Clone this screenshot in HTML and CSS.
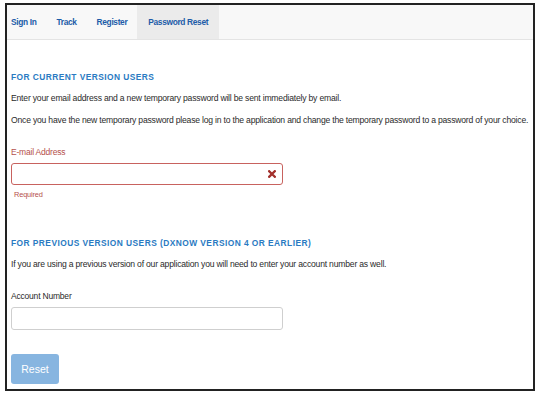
FILE: index.html
```html
<!DOCTYPE html>
<html>
<head>
<meta charset="utf-8">
<link rel="stylesheet" href="styles.css">
</head>
<body>
<div class="frame">
  <nav class="tabs">
    <a class="tab">Sign In</a>
    <a class="tab">Track</a>
    <a class="tab">Register</a>
    <a class="tab active">Password Reset</a>
  </nav>
  <div class="content">
    <h2 class="heading first">FOR CURRENT VERSION USERS</h2>
    <p class="text">Enter your email address and a new temporary password will be sent immediately by email.</p>
    <p class="text">Once you have the new temporary password please log in to the application and change the temporary password to a password of your choice.</p>
    <div class="field error">
      <label class="label">E-mail Address</label>
      <div class="input">
        <svg class="x-icon" width="8" height="8" viewBox="0 0 8 8"><path d="M1.2 1.2L6.8 6.8M6.8 1.2L1.2 6.8" stroke="#a3302c" stroke-width="2.3" stroke-linecap="square"/></svg>
      </div>
      <div class="hint">Required</div>
    </div>
    <h2 class="heading second">FOR PREVIOUS VERSION USERS (DXNOW VERSION 4 OR EARLIER)</h2>
    <p class="text">If you are using a previous version of our application you will need to enter your account number as well.</p>
    <div class="field">
      <label class="label">Account Number</label>
      <div class="input"></div>
    </div>
    <button class="btn">Reset</button>
  </div>
</div>
</body>
</html>
```
FILE: styles.css
```css
html, body {
  margin: 0;
  padding: 0;
  background: #fff;
}
body {
  padding: 3px 3px 0 5px;
  font-family: "Liberation Sans", Arial, sans-serif;
}
.frame {
  width: 526px;
  height: 384px;
  border: 2px solid #222;
  background: #fff;
  overflow: hidden;
}
.tabs {
  display: flex;
  height: 34px;
  background: #f8f8f8;
  border-bottom: 1px solid #e4e4e4;
}
.tab {
  display: flex;
  align-items: center;
  padding: 0 10px;
  font-size: 8.4px;
  letter-spacing: -0.35px;
  font-weight: bold;
  color: #1d5ca8;
}
.tab:first-child {
  padding-left: 4px;
}
.tab.active {
  background: #ebebeb;
  padding: 0 11px;
}
.content {
  padding: 0 4px;
}
.heading {
  margin: 0;
  font-size: 8.4px;
  line-height: 12px;
  font-weight: bold;
  letter-spacing: 0.45px;
  color: #2a7ac2;
}
.heading.first {
  margin-top: 31px;
  margin-bottom: 9px;
}
.heading.second {
  margin-top: 37px;
  margin-bottom: 9px;
}
.text {
  margin: 0 0 10px;
  font-size: 8.6px;
  letter-spacing: -0.2px;
  line-height: 12px;
  color: #2a2a2a;
  white-space: nowrap;
}
.field {
  margin-top: 20px;
}
.label {
  display: block;
  font-size: 8.5px;
  letter-spacing: -0.2px;
  line-height: 12px;
  color: #2a2a2a;
  margin-bottom: 5px;
}
.input {
  width: 272px;
  height: 23px;
  box-sizing: border-box;
  border: 1px solid #cfcfcf;
  border-radius: 3px;
  display: flex;
  align-items: center;
  justify-content: flex-end;
  padding-right: 6px;
}
.field.error .label {
  color: #b5504c;
}
.field.error .input {
  height: 22px;
  border-color: #c8625e;
}
.hint {
  margin-top: 5px;
  font-size: 7.4px;
  letter-spacing: -0.15px;
  line-height: 10px;
  color: #b5504c;
  padding-left: 3px;
}
.btn {
  margin-top: 24px;
  width: 48px;
  height: 30px;
  border: none;
  border-radius: 3px;
  background: #87b5e0;
  color: #fff;
  font-family: "Liberation Sans", Arial, sans-serif;
  font-size: 10.5px;
  padding: 0;
}
```
